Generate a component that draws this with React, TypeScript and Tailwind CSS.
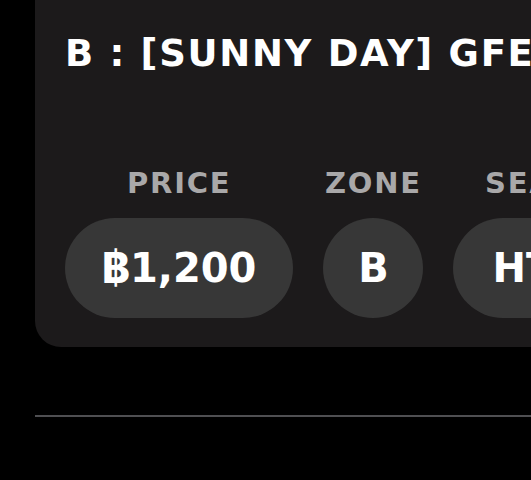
import React from "react";

function Field({
  label,
  children,
  round,
  fixed,
}: {
  label: string;
  children: React.ReactNode;
  round?: boolean;
  fixed?: boolean;
}) {
  let pill =
    "mt-[20px] h-[100px] rounded-full bg-[#373737] flex items-center text-[40px] leading-none font-bold text-white whitespace-nowrap ";
  if (round) pill += "w-[100px] justify-center";
  else if (fixed) pill += "w-[151px] justify-start pl-[39px] overflow-hidden";
  else pill += "px-[37px] justify-center";
  return (
    <div className="flex flex-col items-center shrink-0">
      <div className="text-[29px] leading-none font-bold tracking-[1.8px] text-[#a9a8a9] whitespace-nowrap">
        {label}
      </div>
      <div className={pill}>{children}</div>
    </div>
  );
}

export default function App() {
  return (
    <div className="w-[531px] h-[480px] bg-black overflow-hidden font-['DejaVu_Sans',sans-serif]">
      <div className="ml-[35px] w-[640px] bg-[#1c1a1b] rounded-bl-[26px] pl-[30px] pt-[35px] pb-[29px]">
        <h1 className="text-[37px] leading-none font-bold tracking-[1.7px] text-white whitespace-nowrap">
          B : [SUNNY DAY] GFESTIVAL
        </h1>
        <div className="mt-[97px] flex gap-[30px]">
          <Field label="PRICE">
            <span className="font-['Inter',sans-serif] font-extrabold text-[42px]">฿</span>
            <span>1,200</span>
          </Field>
          <Field label="ZONE" round>
            B
          </Field>
          <Field label="SEAT" fixed>
            HT12
          </Field>
        </div>
      </div>
      <div className="ml-[35px] mt-[68px] h-[2px] bg-[#4f4f52]" />
    </div>
  );
}
